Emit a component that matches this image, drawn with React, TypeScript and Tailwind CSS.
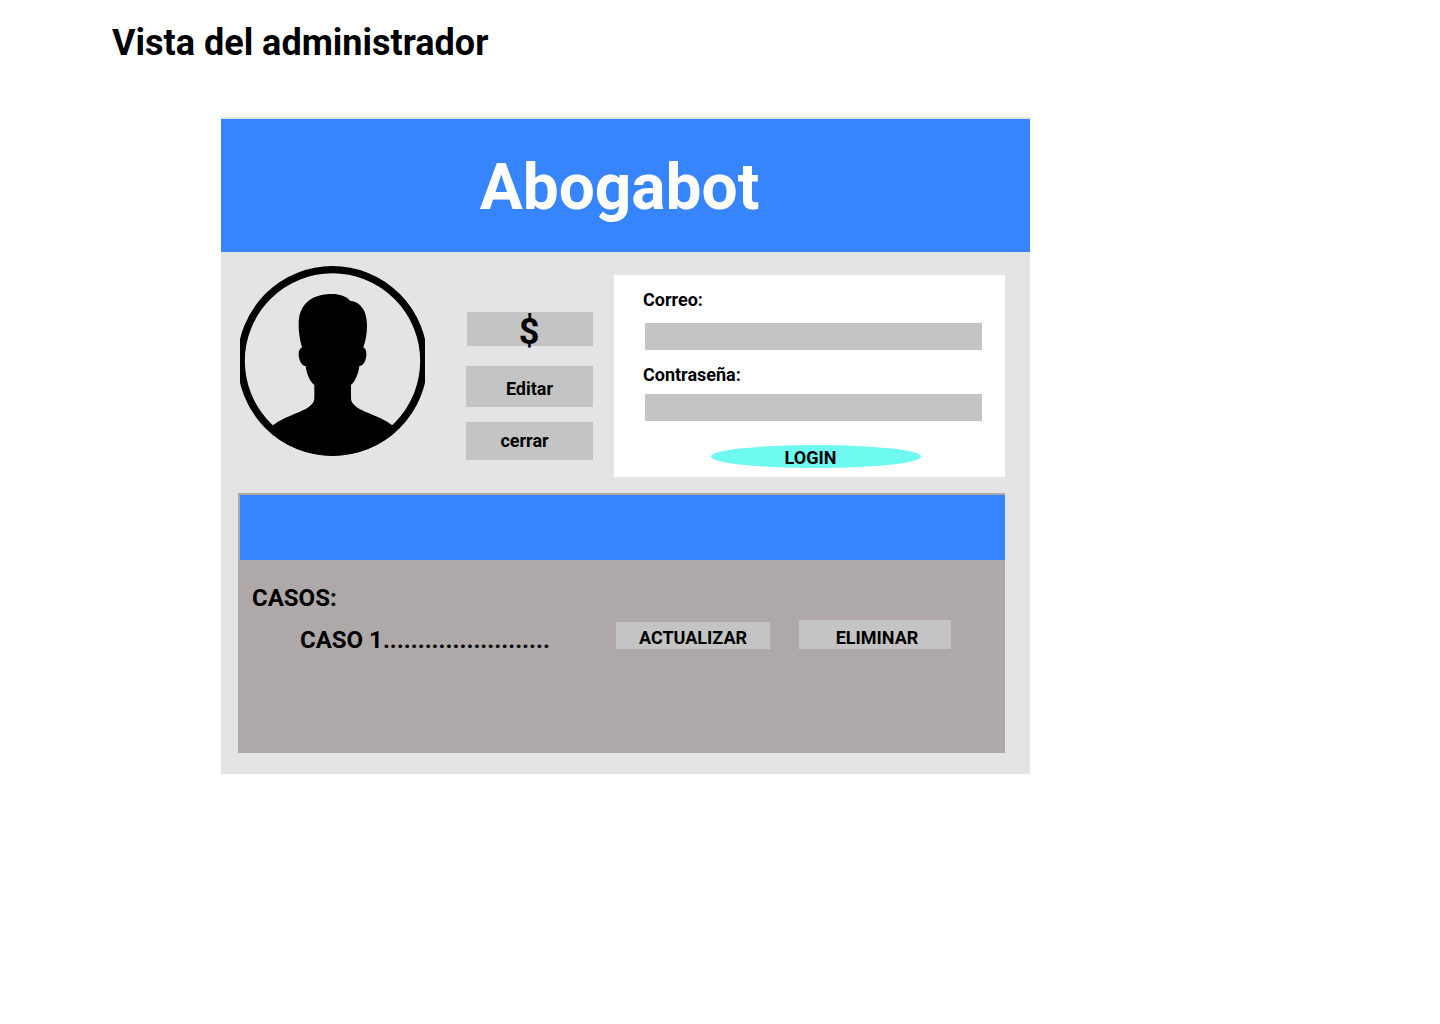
function Avatar() {
  return (
    <svg
      className="h-[190px] w-[185px] shrink-0"
      viewBox="45 33 555 570"
      role="img"
      aria-label="Foto de perfil"
    >
      <defs>
        <clipPath id="avatar-disc">
          <circle cx="322.5" cy="318" r="284" />
        </clipPath>
      </defs>
      <circle cx="322.5" cy="318" r="274" fill="none" stroke="#000" strokeWidth="22" />
      <path
        clipPath="url(#avatar-disc)"
        d="M322 117C342 117 366 124 375 137C408 141 426 167 426 212C426 238 421 260 415 277C421 280 424 287 424 297C424 316 416 333 403 333C401 355 390 380 378 390V430C378 448 398 461 422 471C455 484 482 495 502 511L540 610H100L144 511C163 495 191 484 223 471C248 461 268 448 268 430V390C255 380 244 355 242 333C230 333 221 316 221 297C221 287 225 280 231 277C226 260 221 238 221 208C221 148 258 117 322 117Z"
      />
    </svg>
  );
}

function ProfileActions() {
  return (
    <div className="mt-[46px] ml-[41px] flex w-[127px] shrink-0 flex-col items-end">
      <button
        type="button"
        className="flex h-[34px] w-[126px] items-center justify-center bg-[#c4c4c4] pt-1.5 pr-0.5 text-4xl leading-[42px]"
      >
        $
      </button>
      <button
        type="button"
        className="mt-5 flex h-[41px] w-full items-center justify-center bg-[#c4c4c4] pt-1"
      >
        Editar
      </button>
      <button
        type="button"
        className="mt-[15px] flex h-[38px] w-full items-center justify-center bg-[#c4c4c4] pr-2.5 pb-0.5"
      >
        cerrar
      </button>
    </div>
  );
}

function LoginForm() {
  return (
    <form
      className="mt-[9px] ml-[21px] flex min-w-0 flex-1 flex-col bg-white pt-3.5 pr-[23px] pb-[9px] pl-[31px]"
      onSubmit={(event) => event.preventDefault()}
    >
      <label htmlFor="correo" className="-ml-0.5">
        Correo:
      </label>
      <input id="correo" type="email" className="mt-[13px] h-[27px] w-full bg-[#c4c4c4] px-2" />
      <label htmlFor="contrasena" className="mt-3.5 -ml-0.5">
        Contraseña:
      </label>
      <input
        id="contrasena"
        type="password"
        className="mt-[9px] h-[27px] w-full bg-[#c4c4c4] px-2"
      />
      <button
        type="submit"
        className="mt-6 ml-1 flex h-[23px] w-[210px] items-center justify-center self-center rounded-[50%] bg-[#6efaf1] pt-0.5 pr-2.5"
      >
        LOGIN
      </button>
    </form>
  );
}

function Cases() {
  return (
    <section className="mt-4 mr-[25px] ml-[17px] bg-[#aea8a8] pt-0.5 pb-[104px]">
      <div className="ml-0.5 h-[65px] bg-[#3685ff]" />
      <h2 className="mt-6 ml-3.5 text-2xl leading-7">CASOS:</h2>
      <div className="mt-2 flex items-end pr-[54px] pl-[62px]">
        <p className="-mb-[5px] min-w-0 flex-1 text-2xl leading-7">
          CASO 1........................
        </p>
        <button
          type="button"
          className="flex h-[27px] w-[154px] items-center justify-center bg-[#c4c4c4] pt-1"
        >
          ACTUALIZAR
        </button>
        <button
          type="button"
          className="ml-[29px] flex h-[29px] w-[152px] items-center justify-center bg-[#c4c4c4] pt-1.5 pl-1"
        >
          ELIMINAR
        </button>
      </div>
    </section>
  );
}

export default function App() {
  return (
    <main className="min-h-screen bg-white pt-[22px] font-['Roboto',sans-serif] text-lg leading-[21px] font-bold text-black">
      <h1 className="ml-28 text-4xl leading-[42px]">Vista del administrador</h1>
      <div className="mt-[53px] ml-[221px] max-w-[809px] bg-[#e4e4e4] pt-0.5 pb-[21px]">
        <header className="flex h-[133px] items-center justify-center bg-[#3685ff] pt-1 pr-3 text-[64px] leading-[75px] text-white">
          Abogabot
        </header>
        <div className="flex items-start pt-3.5 pr-[25px] pl-[19px]">
          <Avatar />
          <ProfileActions />
          <LoginForm />
        </div>
        <Cases />
      </div>
    </main>
  );
}
